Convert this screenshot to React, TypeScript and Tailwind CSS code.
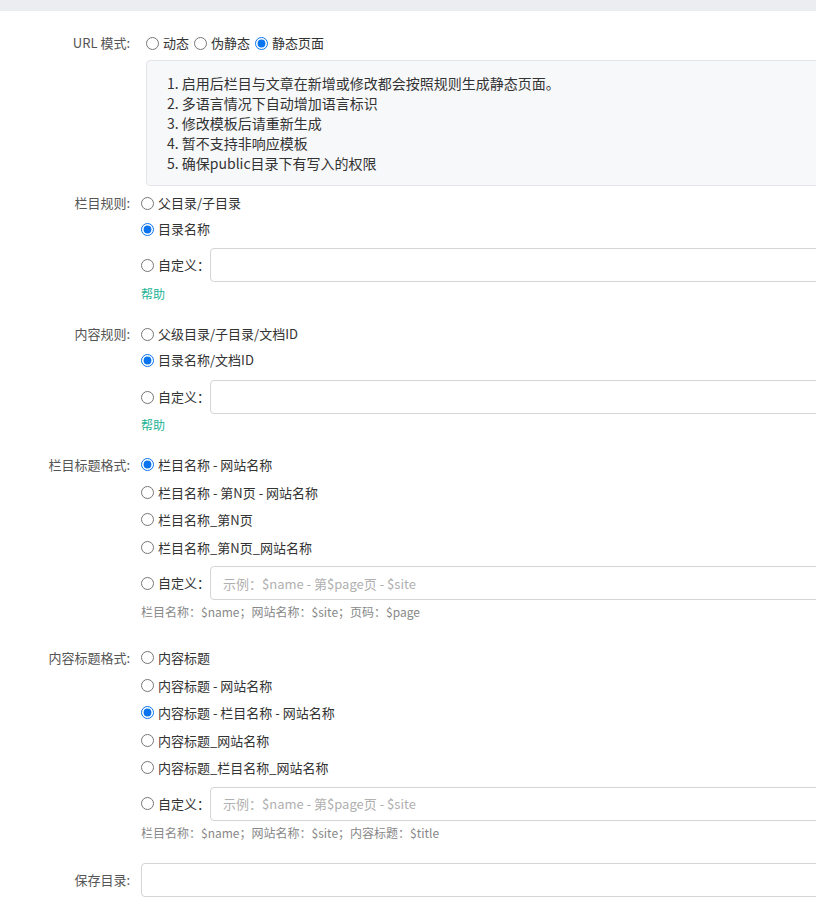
import React from "react";

const FONT = '"Noto Sans CJK SC", "Noto Sans", sans-serif';

function Radio({ checked, label, className = "" }: { checked?: boolean; label: string; className?: string }) {
  return (
    <label className={"flex items-center " + className}>
      <input type="radio" defaultChecked={checked} className="m-0 w-[13px] h-[13px] shrink-0 accent-[#0a74f0]" />
      <span className="ml-[4px] text-[13px] text-[#333] whitespace-nowrap">{label}</span>
    </label>
  );
}

function Label({ text, h }: { text: string; h: string }) {
  return (
    <div className={"w-[130px] shrink-0 flex items-center justify-end text-[13px] text-[#555] whitespace-nowrap " + h}>
      {text}
    </div>
  );
}

function CustomRow({ placeholder, mt }: { placeholder?: string; mt: string }) {
  return (
    <div className={"flex items-center w-[1100px] " + mt}>
      <div className="w-[69px] shrink-0 flex items-center">
        <input type="radio" className="m-0 w-[13px] h-[13px] shrink-0" />
        <span className="ml-[4px] text-[13px] text-[#333] whitespace-nowrap">自定义：</span>
      </div>
      <input
        type="text"
        placeholder={placeholder}
        className="h-[34px] w-[1000px] shrink-0 border border-[#d4d4d4] rounded-[4px] px-[12px] text-[13px] text-[#333] placeholder:text-[#b0b0b0] outline-none bg-white"
      />
    </div>
  );
}

export default function App() {
  return (
    <div className="w-[816px] min-h-[910px] bg-white overflow-hidden" style={{ fontFamily: FONT }}>
      <div className="h-[11px] bg-[#ebedf0]" />

      {/* URL mode */}
      <div className="flex mt-[19px] w-[1300px]">
        <Label text="URL 模式:" h="h-[26px]" />
        <div className="ml-[11px] w-[1100px] shrink-0">
          <div className="flex items-center h-[26px] pl-[5px] gap-[5px]">
            <Radio label="动态" />
            <Radio label="伪静态" />
            <Radio label="静态页面" checked />
          </div>
          <div className="ml-[5px] mt-[4px] w-[1000px] border border-[#e3e5e8] bg-[#f7f8fa] rounded-[4px] py-[12px] pl-[20px] text-[14px] leading-[20px] text-[#333]">
            <div>1. 启用后栏目与文章在新增或修改都会按照规则生成静态页面。</div>
            <div>2. 多语言情况下自动增加语言标识</div>
            <div>3. 修改模板后请重新生成</div>
            <div>4. 暂不支持非响应模板</div>
            <div>5. 确保public目录下有写入的权限</div>
          </div>
        </div>
      </div>

      {/* 栏目规则 */}
      <div className="flex mt-[4px] w-[1300px]">
        <Label text="栏目规则:" h="h-[26px]" />
        <div className="ml-[11px] w-[1100px] shrink-0">
          <Radio label="父目录/子目录" className="h-[26px]" />
          <Radio label="目录名称" checked className="h-[26px]" />
          <CustomRow mt="mt-[6px]" />
          <div className="mt-[2px] h-[20px] flex items-center text-[12px] text-[#1ab394]">帮助</div>
        </div>
      </div>

      {/* 内容规则 */}
      <div className="flex mt-[17px] w-[1300px]">
        <Label text="内容规则:" h="h-[26px]" />
        <div className="ml-[11px] w-[1100px] shrink-0">
          <Radio label="父级目录/子目录/文档ID" className="h-[26px]" />
          <Radio label="目录名称/文档ID" checked className="h-[26px]" />
          <CustomRow mt="mt-[7px]" />
          <div className="mt-[1px] h-[20px] flex items-center text-[12px] text-[#1ab394]">帮助</div>
        </div>
      </div>

      {/* 栏目标题格式 */}
      <div className="flex mt-[16px] w-[1300px]">
        <Label text="栏目标题格式:" h="h-[27.5px]" />
        <div className="ml-[11px] w-[1100px] shrink-0">
          <Radio label="栏目名称 - 网站名称" checked className="h-[27.5px]" />
          <Radio label="栏目名称 - 第N页 - 网站名称" className="h-[27.5px]" />
          <Radio label="栏目名称_第N页" className="h-[27.5px]" />
          <Radio label="栏目名称_第N页_网站名称" className="h-[27.5px]" />
          <CustomRow mt="mt-[5px]" placeholder="示例：$name - 第$page页 - $site" />
          <div className="mt-[3px] h-[18px] flex items-center text-[12px] text-[#888]">
            栏目名称：$name；网站名称：$site；页码：$page
          </div>
        </div>
      </div>

      {/* 内容标题格式 */}
      <div className="flex mt-[23px] w-[1300px]">
        <Label text="内容标题格式:" h="h-[27.5px]" />
        <div className="ml-[11px] w-[1100px] shrink-0">
          <Radio label="内容标题" className="h-[27.5px]" />
          <Radio label="内容标题 - 网站名称" className="h-[27.5px]" />
          <Radio label="内容标题 - 栏目名称 - 网站名称" checked className="h-[27.5px]" />
          <Radio label="内容标题_网站名称" className="h-[27.5px]" />
          <Radio label="内容标题_栏目名称_网站名称" className="h-[27.5px]" />
          <CustomRow mt="mt-[5px]" placeholder="示例：$name - 第$page页 - $site" />
          <div className="mt-[3px] h-[18px] flex items-center text-[12px] text-[#888]">
            栏目名称：$name；网站名称：$site；内容标题：$title
          </div>
        </div>
      </div>

      {/* 保存目录 */}
      <div className="flex mt-[21px] w-[1300px]">
        <Label text="保存目录:" h="h-[34px]" />
        <div className="ml-[11px] w-[1100px] shrink-0">
          <input
            type="text"
            className="h-[34px] w-[1000px] border border-[#d4d4d4] rounded-[4px] px-[12px] text-[13px] outline-none bg-white"
          />
        </div>
      </div>
    </div>
  );
}
